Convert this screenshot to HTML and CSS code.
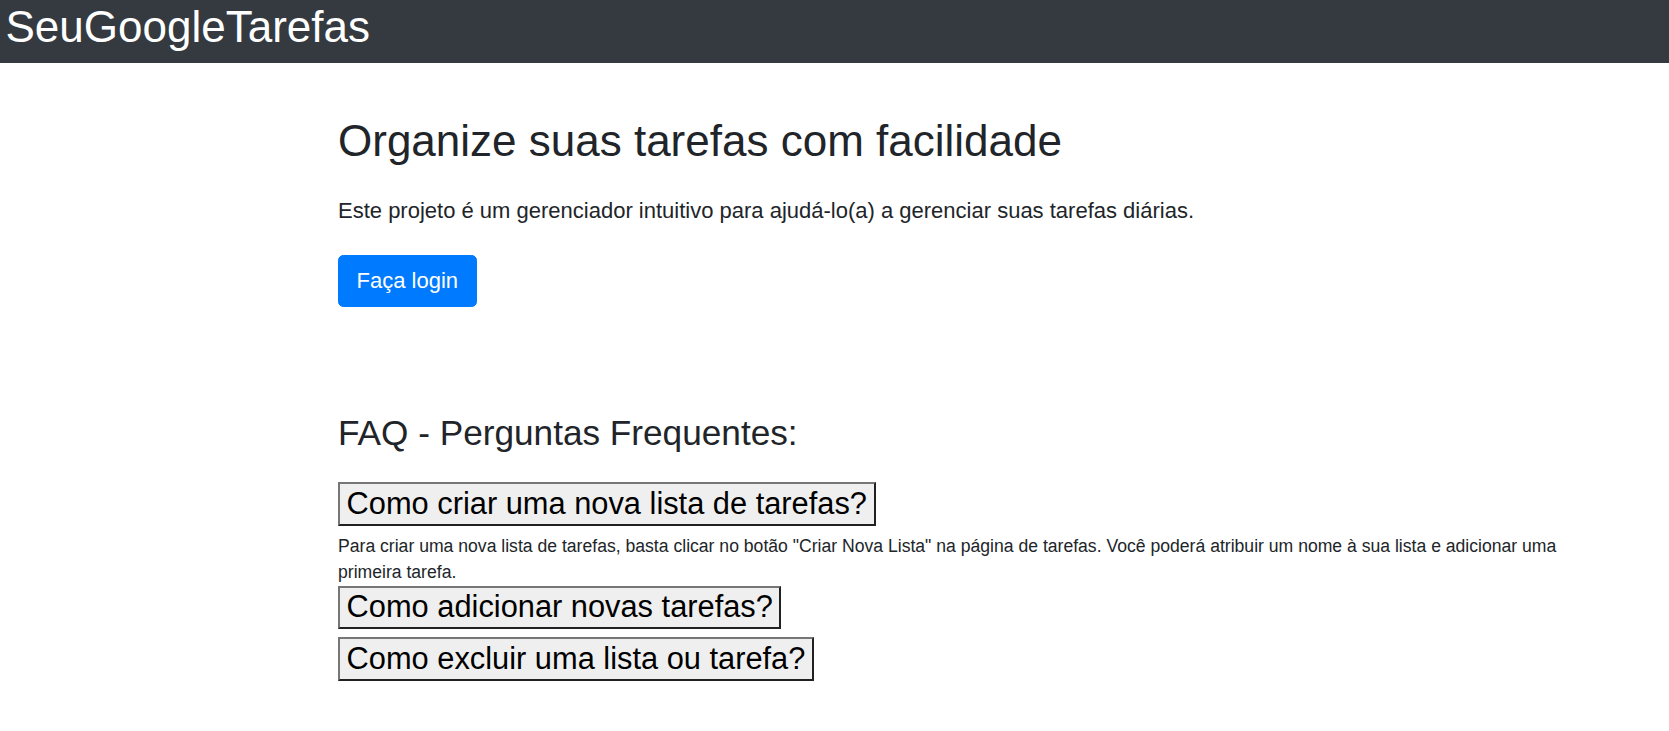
FILE: index.html
```html
<!DOCTYPE html>
<html lang="pt-BR">
<head>
<meta charset="utf-8">
<title>SeuGoogleTarefas</title>
<link rel="stylesheet" href="styles.css">
</head>
<body>
<header class="topbar">
  <h1 class="brand">SeuGoogleTarefas</h1>
</header>
<main class="main">
  <section class="hero">
    <h1 class="hero-title">Organize suas tarefas com facilidade</h1>
    <p class="lead">Este projeto é um gerenciador intuitivo para ajudá-lo(a) a gerenciar suas tarefas diárias.</p>
    <a class="btn-login" href="#">Faça login</a>
  </section>
  <section class="faq">
    <h2 class="faq-title">FAQ - Perguntas Frequentes:</h2>
    <h3 class="faq-q"><button class="faq-btn" type="button">Como criar uma nova lista de tarefas?</button></h3>
    <div class="faq-a">Para criar uma nova lista de tarefas, basta clicar no botão "Criar Nova Lista" na página de tarefas. Você poderá atribuir um nome à sua lista e adicionar uma primeira tarefa.</div>
    <h3 class="faq-q"><button class="faq-btn" type="button">Como adicionar novas tarefas?</button></h3>
    <h3 class="faq-q"><button class="faq-btn" type="button">Como excluir uma lista ou tarefa?</button></h3>
  </section>
</main>
</body>
</html>
```
FILE: styles.css
```css
html, body {
  margin: 0;
  padding: 0;
}
body {
  font-family: "Liberation Sans", Arial, sans-serif;
  font-size: 17.6px;
  line-height: 1.5;
  color: #212529;
  background: #fff;
}
.topbar {
  background: #343a40;
  padding: 1px 0 9px 5.5px;
}
.brand {
  margin: 0;
  font-size: 44px;
  line-height: 1.2;
  font-weight: 500;
  color: #fff;
}
.main {
  padding: 0 79px 0 338px;
}
.hero {
  padding-top: 51.8px;
}
.hero-title {
  margin: 0 0 26.4px;
  font-size: 44px;
  line-height: 1.2;
  font-weight: 500;
}
.lead {
  margin: 0 0 27.8px;
  font-size: 22px;
  line-height: 1.5;
  font-weight: 400;
}
.btn-login {
  display: inline-block;
  background: #007bff;
  color: #fff;
  border: 1px solid #007bff;
  padding: 8.8px 17.6px;
  font-size: 22px;
  line-height: 1.5;
  border-radius: 5.3px;
  text-decoration: none;
}
.faq {
  padding-top: 105px;
}
.faq-title {
  margin: 0 0 28px;
  font-size: 35.2px;
  line-height: 1.2;
  font-weight: 500;
}
.faq-q {
  margin: 0 0 8.8px;
  font-size: 30.8px;
  line-height: 1.2;
  font-weight: 500;
}
.faq-btn {
  margin: 0;
  font: inherit;
  color: #000;
  background: #efefef;
  border: 2px outset #767676;
  border-radius: 0;
  padding: 1.1px 6.6px;
}
.faq-a {
  margin: 0;
  font-size: 17.6px;
  line-height: 25.6px;
}
```
